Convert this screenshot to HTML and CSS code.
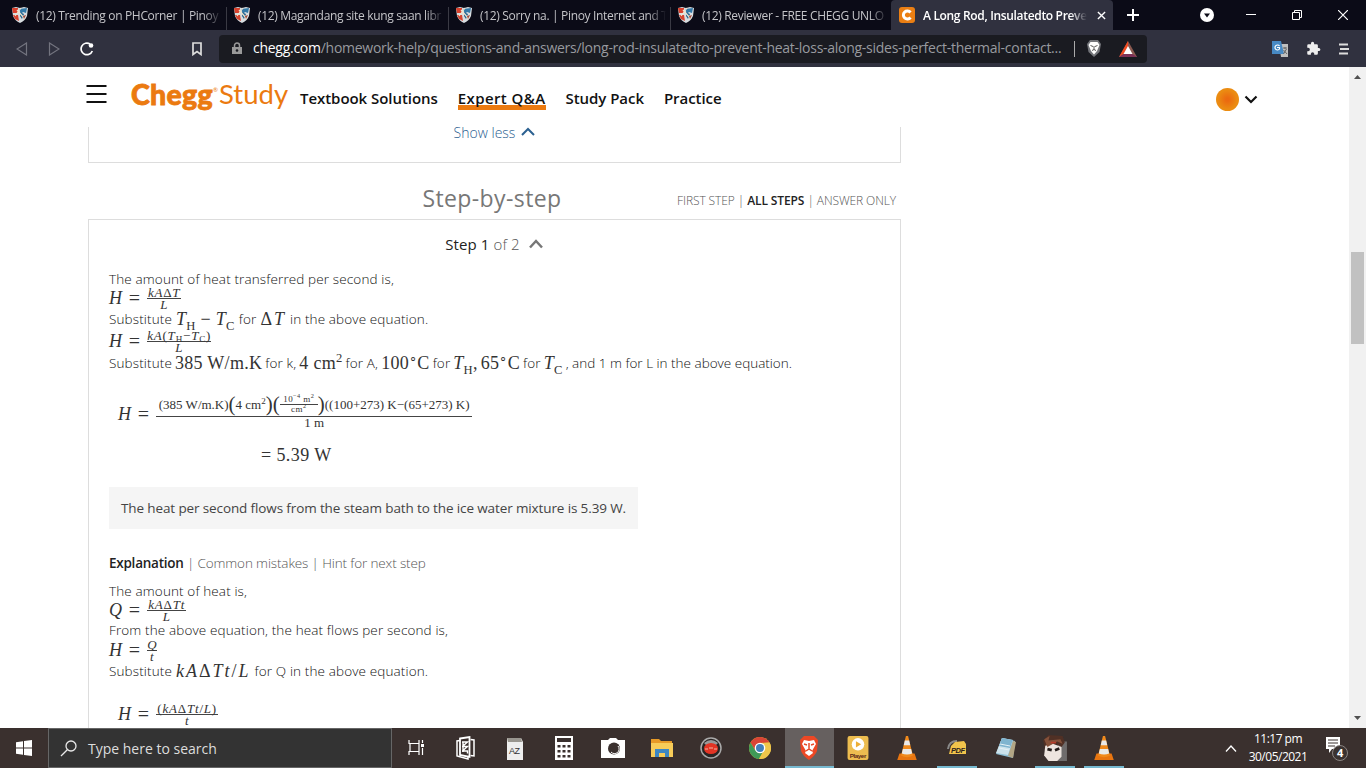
FILE: index.html
```html
<!DOCTYPE html>
<html lang="en">
<head>
  <meta charset="UTF-8" />
  <meta name="viewport" content="width=device-width, initial-scale=1" />
  <title>A Long Rod, Insulatedto Prevent Heat Loss | Chegg.com</title>
  <link rel="stylesheet" href="styles.css">
</head>
<body>
  <svg width="0" height="0" class="defs">
    <symbol id="shield" viewBox="0 0 16 16">
      <path d="M0 1L4 0L8 1L12 0L16 1L15 9Q13 14 8 16Q3 14 1 9Z" fill="#d8dde0"/>
      <path d="M0 1H6V6H1Z" fill="#d8402c"/>
      <path d="M7 2L15 1L14 6L11 5L9 7Z" fill="#3279a8"/>
      <path d="M8 5L12 7L10 12L8 9Z" fill="#26658f"/>
      <path d="M1 8L6 8L7 14L3 12Z" fill="#d5432f"/>
      <path d="M5 3L13 12M9 1L3 9" stroke="#eee5d0" stroke-width="1.2"/>
      <path d="M11 9L14 8L12 12Z" fill="#a04a3a"/>
    </symbol>
    <symbol id="vlc" viewBox="0 0 18 24">
      <path d="M2 17H16L18 23H0Z" fill="#e87510"/>
      <path d="M8 1H10L14.5 19Q9 22 3.5 19Z" fill="#f08a1c"/>
      <path d="M7 5H11L12 9.500H6Z" fill="#e9e9e9"/>
      <path d="M5.200 13H12.800L13.800 17Q9 19 4.200 17Z" fill="#e9e9e9"/>
    </symbol>
  </svg>

  <div class="tabs">
    <div class="tab"><svg class="fav"><use href="#shield"/></svg><span class="tab-title">(12) Trending on PHCorner | Pinoy I</span></div>
    <div class="tab"><svg class="fav"><use href="#shield"/></svg><span class="tab-title">(12) Magandang site kung saan libr</span></div>
    <div class="tab"><svg class="fav"><use href="#shield"/></svg><span class="tab-title">(12) Sorry na. | Pinoy Internet and T</span></div>
    <div class="tab last"><svg class="fav"><use href="#shield"/></svg><span class="tab-title">(12) Reviewer - FREE CHEGG UNLO</span></div>
    <div class="tab active">
      <span class="chegg-fav"><svg width="16" height="16" viewBox="0 0 16 16"><path d="M11.500 5.500A4 4 0 1 0 11.500 10.500" fill="none" stroke="#fff" stroke-width="3"/></svg></span>
      <span class="tab-title">A Long Rod, Insulatedto Preve</span>
      <svg width="9" height="9" viewBox="0 0 10 10"><path d="M1 1L9 9M9 1L1 9" stroke="#fff" stroke-width="1.500"/></svg>
    </div>
    <svg class="new-tab" width="12" height="12" viewBox="0 0 12 12"><path d="M6 0V12M0 6H12" stroke="#fff" stroke-width="2"/></svg>
    <div class="window-buttons">
      <svg class="tab-search" width="14" height="14" viewBox="0 0 14 14"><circle cx="7" cy="7" r="7" fill="#fff"/><path d="M4 5.500H10L7 9.500Z" fill="#0b0b17"/></svg>
      <svg width="10" height="10" viewBox="0 0 10 10"><path d="M0 4.500H10" stroke="#fff"/></svg>
      <svg width="10" height="10" viewBox="0 0 10 10"><path d="M.5 2.500H7.500V9.500H.5ZM2.500 2.500V.5H9.500V7.500H7.500" fill="none" stroke="#fff"/></svg>
      <svg width="10" height="10" viewBox="0 0 10 10"><path d="M0 0L10 10M10 0L0 10" stroke="#fff" stroke-width="1.200"/></svg>
    </div>
  </div>

  <div class="toolbar">
    <div class="nav-icons">
      <svg width="12" height="14" viewBox="0 0 12 14"><path d="M10.500 1V13L1 7Z" fill="none" stroke="#73747f" stroke-width="1.200"/></svg>
      <svg width="12" height="14" viewBox="0 0 12 14"><path d="M1.500 1V13L11 7Z" fill="none" stroke="#73747f" stroke-width="1.200"/></svg>
      <svg width="14" height="14" viewBox="0 0 14 14"><path d="M10 2A5.800 5.800 0 1 0 12.300 9" fill="none" stroke="#fff" stroke-width="1.700"/><circle cx="11" cy="3.500" r="2.300" fill="#fff"/></svg>
    </div>
    <svg class="bookmark" width="10" height="14" viewBox="0 0 10 14"><path d="M1 1H9V12.500L5 9.500L1 12.500Z" fill="none" stroke="#ddd" stroke-width="1.700"/></svg>
    <div class="url-bar">
      <svg width="10" height="13" viewBox="0 0 10 13"><path d="M2.500 6V3.500A2.500 2.500 0 0 1 7.500 3.500V6" fill="none" stroke="#9a9a9a" stroke-width="1.500"/><path d="M0 5H10V12H0Z" fill="#9a9a9a"/><circle cx="5" cy="8.500" r="1.300" fill="#1a1b21"/></svg>
      <span class="url"><b>chegg.com</b>/homework-help/questions-and-answers/long-rod-insulatedto-prevent-heat-loss-along-sides-perfect-thermal-contact...</span>
      <i class="url-line"></i>
      <svg width="14" height="17" viewBox="0 0 14 17"><path d="M3 0H11L14 4L12.500 12L7 17L1.500 12L0 4Z" fill="#73757a"/><path d="M3.500 2H10.500L12.500 5L10 11L7 14.500L4 11L1.500 5Z" fill="#fff"/><path d="M3.500 5.500L6 6.500M10.500 5.500L8 6.500M7 6V9.500M5 10.500L7 9.500L9 10.500" stroke="#555" fill="none"/></svg>
      <svg class="bat" width="18" height="16" viewBox="0 0 18 16"><path d="M9 0L18 16H0Z" fill="#8b5a50"/><path d="M9 0V6L4.500 13L0 16Z" fill="#f04a20"/><path d="M0 16H18L13.500 13H4.500Z" fill="#7d3158"/><path d="M9 5L13.500 13H4.500Z" fill="#fff"/></svg>
    </div>
    <div class="extensions">
      <svg width="16" height="16" viewBox="0 0 16 16"><path d="M7 3H16V16H9Z" fill="#bfbfbf"/><path d="M0 0H9L12 13H0Z" fill="#4789c4"/><path d="M7.500 5A2.500 2.500 0 1 0 7.500 8V6.500H5" fill="none" stroke="#fff" stroke-width="1.200"/><path d="M11 7H15M13 6V8M14.500 8L11.500 13M11.500 9L15 13" stroke="#666" fill="none"/></svg>
      <svg width="15" height="15" viewBox="0 0 24 24"><path d="M20.500 11H19V7a2 2 0 0 0-2-2h-4V3.500a2.500 2.500 0 0 0-5 0V5H4a2 2 0 0 0-2 2v3.800h1.500a2.700 2.700 0 0 1 0 5.400H2V20a2 2 0 0 0 2 2h3.800v-1.500a2.700 2.700 0 0 1 5.400 0V22H17a2 2 0 0 0 2-2v-4h1.500a2.500 2.500 0 0 0 0-5z" fill="#eee"/></svg>
      <svg width="10" height="12" viewBox="0 0 10 12"><path d="M0 1.500H9M1 6H10M0 10.500H9" stroke="#ddd" stroke-width="2"/></svg>
    </div>
  </div>

  <div class="page">
    <div class="content">
      <header class="site-header">
        <svg class="burger" width="20" height="18" viewBox="0 0 20 18"><path d="M0 1H20M0 9H20M0 17H20" stroke="#111" stroke-width="2"/></svg>
        <div class="logo"><b>Chegg</b><sup>®</sup><span>Study</span></div>
        <nav>
          <a>Textbook Solutions</a>
          <a class="current">Expert Q&amp;A</a>
          <a>Study Pack</a>
          <a>Practice</a>
        </nav>
        <div class="account">
          <span class="avatar"></span>
          <svg width="14" height="9" viewBox="0 0 14 9"><path d="M1.500 1.500L7 7L12.500 1.500" fill="none" stroke="#111" stroke-width="2.200"/></svg>
        </div>
      </header>

      <div class="question-card">
        <span>Show less</span>
        <svg width="14" height="9" viewBox="0 0 14 9"><path d="M1 8L7 2L13 8" fill="none" stroke="#2c6191" stroke-width="2"/></svg>
      </div>

      <div class="steps-header">
        <h2>Step-by-step</h2>
        <p class="step-filter">FIRST STEP | <b>ALL STEPS</b> | ANSWER ONLY</p>
      </div>

      <div class="step-card">
        <div class="step-title">
          <span><b>Step 1</b> of 2</span>
          <svg width="14" height="10" viewBox="0 0 14 10"><path d="M1 8.500L7 2L13 8.500" fill="none" stroke="#777" stroke-width="2.500"/></svg>
        </div>

        <div class="row r18"><span>The amount of heat transferred per second is,</span></div>
        <div class="row r20 math"><i>H</i><span class="eq">=</span><span class="frac f34"><span class="num"><i>kA</i>Δ<i>T</i></span><span class="den"><i>L</i></span></span></div>
        <div class="row r22"><span>Substitute</span><span class="m"><i>T</i><sub>H</sub> − <i>T</i><sub>C</sub></span><span>for</span><span class="m wide">Δ<i>T</i></span><span>in the above equation.</span></div>
        <div class="row r23 math"><i>H</i><span class="eq">=</span><span class="frac f64"><span class="num"><i>kA</i>(<i>T</i><sub>H</sub>−<i>T</i><sub>C</sub>)</span><span class="den"><i>L</i></span></span></div>
        <div class="row r20 values"><span>Substitute</span><span class="m">385 W/m.K</span><span>for k,</span><span class="m">4 cm<sup>2</sup></span><span>for A,</span><span class="m">100<sup>∘</sup>C</span><span>for</span><span class="m"><i>T</i><sub>H</sub>,</span><span class="m">65<sup>∘</sup>C</span><span>for</span><span class="m"><i>T</i><sub>C</sub></span><span class="rest">, and 1 m for L in the above equation.</span></div>

        <div class="row math big-eq"><i>H</i><span class="eq">=</span>
          <span class="frac f316">
            <span class="num">
              <span>(385 W/m.K)</span><span class="paren">(</span><span>4 cm<sup>2</sup></span><span class="paren">)(</span>
              <span class="frac f37"><span class="num">10<sup>−4</sup> m<sup>2</sup></span><span class="den">cm<sup>2</sup></span></span>
              <span class="paren">)</span><span>((100+273) K−(65+273) K)</span>
            </span>
            <span class="den">1 m</span>
          </span>
        </div>
        <div class="row math result"><span>= 5.39 W</span></div>

        <div class="answer">The heat per second flows from the steam bath to the ice water mixture is 5.39 W.</div>

        <div class="row explain"><span><b>Explanation</b> | Common mistakes | Hint for next step</span></div>
        <div class="row r18"><span>The amount of heat is,</span></div>
        <div class="row r20 math"><i>Q</i><span class="eq">=</span><span class="frac f39"><span class="num"><i>kA</i>Δ<i>Tt</i></span><span class="den"><i>L</i></span></span></div>
        <div class="row r20"><span>From the above equation, the heat flows per second is,</span></div>
        <div class="row r20 math"><i>H</i><span class="eq">=</span><span class="frac f10"><span class="num"><i>Q</i></span><span class="den"><i>t</i></span></span></div>
        <div class="row r22"><span>Substitute</span><span class="m wide"><i>kA</i>Δ<i>Tt</i>/<i>L</i></span><span>for Q in the above equation.</span></div>
        <div class="row math last-eq"><i>H</i><span class="eq">=</span><span class="frac f62"><span class="num">(<i>kA</i>Δ<i>Tt</i>/<i>L</i>)</span><span class="den"><i>t</i></span></span></div>
      </div>
    </div>
    <div class="scrollbar">
      <svg width="9" height="5" viewBox="0 0 9 5"><path d="M1 5L4.500 1L8 5Z" fill="#505050"/></svg>
      <div class="thumb"></div>
      <svg width="9" height="5" viewBox="0 0 9 5"><path d="M1 0L4.500 4L8 0Z" fill="#505050"/></svg>
    </div>
  </div>

  <div class="taskbar">
    <div class="start"><svg width="16" height="16" viewBox="0 0 16 16"><path d="M0 2.300L7 1.300V7.500H0ZM8 1.100L16 0V7.500H8ZM0 8.500H7V14.700L0 13.700ZM8 8.500H16V16L8 14.900Z" fill="#fff"/></svg></div>
    <div class="search">
      <svg width="17" height="17" viewBox="0 0 17 17"><circle cx="11" cy="6" r="5" fill="none" stroke="#e8e8e8" stroke-width="1.300"/><path d="M7.300 9.700L1 16" stroke="#e8e8e8" stroke-width="1.300"/></svg>
      <span>Type here to search</span>
    </div>
    <div class="apps">
      <div class="app"><svg width="17" height="16" viewBox="0 0 17 16"><path d="M1 0V3.500H11V0M2 3.500V11.500M11 3.500V11.500M1 15V11.500H11V15M14.500 0V3M14.500 8V15" fill="none" stroke="#fff" stroke-width="1.200"/><path d="M13 4H16V7H13Z" fill="#fff"/></svg></div>
      <div class="app"><svg width="19" height="24" viewBox="0 0 19 24"><path d="M4 4.500L1 5V20L12 23V21" fill="none" stroke="#fff" stroke-width="1.500"/><path d="M4 2.500L13.500 1V21L4 19Z" fill="none" stroke="#fff" stroke-width="1.800"/><path d="M14.500 3.500L18 4V20L14.500 19.500" fill="none" stroke="#fff" stroke-width="1.500"/><path d="M6 6H11.500L7 10M6 10.500H11.500L7 14.500M6 15H11.500V17.500M7 6V16" fill="none" stroke="#fff" stroke-width="1.400"/></svg></div>
      <div class="app"><svg width="17" height="23" viewBox="0 0 17 23"><path d="M1 1H15L17 5V23H1Z" fill="#eee"/><path d="M1 1H15L16 5H2Z" fill="#99968f"/><text x="3" y="17" font-family="Liberation Sans" font-size="9" fill="#333" textLength="11">AZ</text></svg></div>
      <div class="app"><svg width="18" height="24" viewBox="0 0 18 24"><path d="M0 0H18V24H0Z" fill="#fff"/><path d="M2 2H16V6H2Z" fill="#3a302e"/><path d="M4 9V22M9 9V22M14 9V22" stroke="#3a302e" stroke-width="3" stroke-dasharray="2.500 2.500"/></svg></div>
      <div class="app"><svg width="24" height="20" viewBox="0 0 24 20"><path d="M0 2H7L9 0H15L17 2H24V20H0Z" fill="#fff"/><circle cx="13" cy="10.500" r="6" fill="#3a302e"/><path d="M17 8A4.500 4.500 0 0 1 10 14" fill="none" stroke="#fff"/></svg></div>
      <div class="app"><svg width="22" height="18" viewBox="0 0 22 18"><path d="M0 0H8L10 2H21V6H0Z" fill="#e79a27"/><path d="M0 4H22V18H0Z" fill="#f7cc59"/><path d="M4 18V10H18V18H14V14H8V18Z" fill="#3d87c3"/></svg></div>
      <div class="app"><svg width="22" height="22" viewBox="0 0 22 22"><circle cx="11" cy="11" r="10" fill="#292524" stroke="#aaa" stroke-width="1.500"/><path d="M4 6Q11 0 18 6L16 8H6Z" fill="#999"/><ellipse cx="11" cy="11.500" rx="7" ry="5.500" fill="#e33424"/><path d="M5 12H8M9 11H13M14 12H17" stroke="#f5b4a4"/></svg></div>
      <div class="app"><svg width="22" height="22" viewBox="0 0 22 22"><circle cx="11" cy="11" r="11" fill="#e3b734"/><path d="M1.500 5.500A11 11 0 0 1 20.500 5.500L11 6L6 13Z" fill="#d94436"/><path d="M1.500 5.500A11 11 0 0 0 10 22L14 15L6 13Z" fill="#3f9a57"/><path d="M20.500 5.500A11 11 0 0 1 10 22L15 13L12 6Z" fill="#efc64b"/><circle cx="11" cy="11" r="5.300" fill="#fff"/><circle cx="11" cy="11" r="4" fill="#427fbd"/></svg></div>
      <div class="app selected"><svg width="20" height="24" viewBox="0 0 20 24"><path d="M5 0H15L19 4L18 15Q16 20 10 24Q4 20 2 15L1 4Z" fill="#ec4825"/><path d="M5 4L10 5L15 4L17 8L13 15L14 17L10 20L6 17L7 15L3 8Z" fill="#fff"/><path d="M5 8L8 9M15 8L12 9M10 7V13M7 15L10 13L13 15" fill="none" stroke="#e74a29" stroke-width="1.500"/></svg></div>
      <div class="app"><svg width="22" height="24" viewBox="0 0 20 23"><rect width="20" height="23" rx="2" fill="#edbd50"/><circle cx="10" cy="8" r="6" fill="#fff"/><path d="M8 5L13 8L8 11Z" fill="#edae36"/><text x="2" y="21" font-family="Liberation Sans" font-weight="bold" font-size="6" fill="#5a2b18" textLength="16">Player</text></svg></div>
      <div class="app"><svg width="20" height="26"><use href="#vlc"/></svg></div>
      <div class="app open"><svg width="20" height="16" viewBox="0 0 20 16"><path d="M1 9Q2 1 10 1" fill="none" stroke="#888" stroke-width="2"/><path d="M4 6L8 2L17 1L19 4V14H2Z" fill="#f0c34b"/><text x="4" y="13" font-family="Liberation Sans" font-weight="bold" font-style="italic" font-size="7.500" fill="#2a211b" textLength="14">PDF</text></svg></div>
      <div class="app"><svg width="22" height="22" viewBox="0 0 22 22"><path d="M7 1L20 4L18 21L1 17Z" fill="#8dbed4"/><path d="M7 1L18 3L13 18L1 16Z" fill="#cce2eb"/><path d="M7 1L18 3L15 11L4 9Z" fill="#7fb4cf"/><path d="M5 7L15 9M4 11L14 13" stroke="#e4f0f5"/><path d="M18 4L21 5L18 21L13 19Z" fill="#b3a685"/></svg></div>
      <div class="app open"><svg width="24" height="26" viewBox="0 0 22 24"><path d="M14 6H22V24H12Z" fill="#6f6c6c"/><path d="M0 5L5 0L18 1L20 7L17 11L12 8L2 14Z" fill="#503025"/><path d="M2 10L9 8L17 11V20L13 24H5L1 19Z" fill="#eee5df"/><path d="M1 4L6 1L5 5L16 4L18 8L13 6L4 11Z" fill="#84513a"/><path d="M4 13L8 14M11 14L15 12.500" stroke="#221b19" stroke-width="2.500"/><path d="M7 7H12" stroke="#b93b2a" stroke-width="1.500"/></svg></div>
      <div class="app open"><svg width="20" height="26"><use href="#vlc"/></svg></div>
    </div>
    <div class="tray">
      <svg width="12" height="7" viewBox="0 0 12 7"><path d="M1 6.500L6 1L11 6.500" fill="none" stroke="#fff" stroke-width="1.300"/></svg>
      <div class="clock"><span>11:17 pm</span><span>30/05/2021</span></div>
      <svg class="notify" width="24" height="26" viewBox="0 0 24 26"><path d="M1 1H15V13H7L4 17V13H1Z" fill="#fff"/><path d="M3 4H13M3 7H13M3 10H10" stroke="#3a302e"/><circle cx="15" cy="17" r="7.500" fill="#3a3230" stroke="#8b8583"/><text x="15" y="21" text-anchor="middle" font-family="Open Sans" font-weight="bold" font-size="11" fill="#fff">4</text></svg>
    </div>
  </div>
</body>
</html>
```
FILE: styles.css
```css
* {
  box-sizing: border-box;
}
body {
  margin: 0;
  width: 1366px;
  height: 768px;
  overflow: hidden;
  display: flex;
  flex-direction: column;
  font-family: "Open Sans", "Noto Sans", sans-serif;
  background-color: #fff;
}
svg {
  display: block;
  flex: none;
}
.defs {
  position: absolute;
}

/* browser tabs */
.tabs {
  height: 30px;
  display: flex;
  align-items: center;
  padding-left: 5px;
  background-color: #0b0b17;
}
.tab {
  width: 222px;
  height: 30px;
  display: flex;
  align-items: center;
  padding: 0 4px 0 7px;
  color: #c4c4c8;
  font-size: 12px;
  position: relative;
}
.tab::after {
  content: "";
  position: absolute;
  right: 0;
  top: 7px;
  width: 1px;
  height: 23px;
  background-color: #3a3a44;
}
.tab.last::after,
.tab.active::after {
  display: none;
}
.fav {
  width: 16px;
  height: 16px;
  margin-right: 8px;
}
.tab-title {
  width: 186px;
  overflow: hidden;
  white-space: nowrap;
  letter-spacing: -0.33px;
  -webkit-mask-image: linear-gradient(to right, #000 90%, transparent);
  mask-image: linear-gradient(to right, #000 90%, transparent);
}
.tab.active {
  width: 222px;
  margin-left: -2px;
  padding-left: 8px;
  background-color: #30313f;
  border-radius: 4px 4px 0 0;
  color: #fff;
  font-weight: 600;
}
.tab.active .tab-title {
  width: 164px;
  margin-right: 10px;
}
.chegg-fav {
  width: 16px;
  height: 16px;
  margin-right: 8px;
  border-radius: 3px;
  background-color: #eb7f13;
}
.new-tab {
  margin-left: 14px;
}
.window-buttons {
  flex: 1;
  display: flex;
  align-items: center;
  justify-content: flex-end;
  gap: 36px;
  padding-right: 18px;
}
.tab-search {
  margin-right: -4px;
}

/* address bar row */
.toolbar {
  height: 37px;
  display: flex;
  align-items: center;
  background-color: #30313f;
}
.nav-icons {
  display: flex;
  gap: 20px;
  width: 192px;
  padding-left: 16px;
}
.url-bar {
  width: 928px;
  height: 28px;
  margin-left: 17px;
  padding-left: 13px;
  display: flex;
  align-items: center;
  border-radius: 4px;
  background-color: #1a1b21;
}
.url {
  width: 821px;
  margin: -2px 0 0 11px;
  font-size: 14px;
  letter-spacing: -0.27px;
  white-space: nowrap;
  color: #989a9f;
}
.url b {
  font-weight: 400;
  color: #fff;
}
.url-line {
  width: 1px;
  height: 16px;
  margin-right: 12px;
  background-color: #aaa;
}
.bat {
  margin-left: 18px;
}
.extensions {
  flex: 1;
  display: flex;
  align-items: center;
  justify-content: flex-end;
  gap: 18px;
  padding-right: 17px;
}

/* page */
.page {
  height: 661px;
  display: flex;
}
.content {
  flex: 1;
  height: 661px;
  overflow: hidden;
}
.site-header {
  height: 60px;
  display: flex;
  align-items: center;
  padding: 0 91px 0 86px;
}
.burger {
  width: 21px;
  margin-top: -6px;
}
.logo {
  width: 157px;
  margin: -6px 12px 0 24px;
  display: flex;
  align-items: center;
  line-height: 34px;
  font-family: Lato, sans-serif;
  color: #eb7a10;
}
.logo b {
  font-size: 28.5px;
  font-weight: 900;
  letter-spacing: 0.3px;
  -webkit-text-stroke: 0.8px #eb7a10;
}
.logo sup {
  font-size: 6px;
  line-height: 6px;
  margin-bottom: 8px;
}
.logo span {
  margin-left: 1px;
  font-size: 27.5px;
}
nav {
  display: flex;
  gap: 20px;
  margin-top: 4px;
}
nav a {
  padding-bottom: 2px;
  font-size: 15px;
  line-height: 20px;
  font-weight: 600;
  letter-spacing: -0.05px;
  white-space: nowrap;
  color: #111;
}
nav a.current {
  letter-spacing: 0.4px;
  box-shadow: inset 0 -5px #eb7a10;
}
.account {
  margin-left: auto;
  display: flex;
  align-items: center;
  gap: 5px;
  margin-top: 4px;
}
.avatar {
  width: 23px;
  height: 23px;
  border-radius: 50%;
  background: radial-gradient(circle at 50% 50%, #eb6a10 10%, #eb8c12 60%);
}
.question-card {
  width: 813px;
  height: 36px;
  margin-left: 88px;
  display: flex;
  justify-content: center;
  gap: 6px;
  border: 1px solid #ddd;
  border-top: none;
  font-size: 14px;
  line-height: 12px;
  font-weight: 300;
  color: #2c6191;
}
.steps-header {
  width: 813px;
  height: 56px;
  margin-left: 88px;
  display: grid;
  grid-template-columns: 1fr auto 1fr;
  align-items: center;
  padding: 14px 5px 0 0;
}
.steps-header h2 {
  grid-column: 2;
  margin: 0;
  font-size: 23px;
  line-height: 30px;
  font-weight: 400;
  letter-spacing: 0.4px;
  color: #777;
}
.step-filter {
  margin: 4px 0 0;
  text-align: right;
  white-space: nowrap;
  font-size: 12px;
  font-weight: 300;
  letter-spacing: -0.1px;
  color: #555;
}
.step-filter b {
  font-weight: 600;
  color: #222;
}
.step-card {
  width: 813px;
  height: 600px;
  margin-left: 88px;
  padding-left: 20px;
  border: 1px solid #ddd;
}
.step-title {
  height: 50px;
  padding: 0 21px 2px 0;
  display: flex;
  align-items: center;
  justify-content: center;
  gap: 9px;
  font-size: 15px;
  font-weight: 300;
  letter-spacing: 0.1px;
  color: #555;
}
.step-title b {
  font-weight: 400;
  color: #222;
}
.row {
  display: flex;
  align-items: center;
  gap: 4px;
  white-space: nowrap;
  font-size: 13.5px;
  font-weight: 300;
  letter-spacing: 0.13px;
  color: #111;
}
.r18 {
  height: 18px;
}
.r20 {
  height: 20px;
}
.r22 {
  height: 22px;
}
.r23 {
  height: 23px;
}
.values {
  gap: 3px;
}
.values .rest {
  letter-spacing: 0;
}

/* formulas */
.math,
.m {
  font-family: "Liberation Serif", serif;
  font-size: 18px;
  font-weight: 400;
  color: #333;
}
.math {
  gap: 6.5px;
}
.m {
  line-height: 20px;
  letter-spacing: 0.3px;
}
.m.wide {
  letter-spacing: 2px;
}
.eq {
  width: 12px;
  font-size: 20px;
}
sub,
sup {
  font-size: 70%;
  line-height: 0;
}
.frac {
  display: inline-flex;
  flex-direction: column;
  align-items: center;
  font-size: 13px;
  line-height: 11px;
  letter-spacing: 0.8px;
}
.frac sub {
  vertical-align: -2px;
}
.frac .num {
  width: 100%;
  display: block;
  text-align: center;
  border-bottom: 1px solid #444;
}
.f34 {
  width: 34px;
}
.f64 {
  width: 64px;
}
.f39 {
  width: 39px;
}
.f10 {
  width: 10px;
}
.f62 {
  width: 62px;
}
.f316 {
  width: 316px;
  margin-bottom: 8px;
  letter-spacing: 0;
}
.f37 {
  width: 38px;
  font-size: 9px;
  line-height: 9px;
  letter-spacing: 0.4px;
}
.big-eq {
  height: 38px;
  margin: 22px 0 10px 9px;
}
.big-eq .f316 > .num {
  height: 24px;
  display: flex;
  align-items: center;
  justify-content: center;
}
.paren {
  font-size: 21px;
  line-height: 20px;
}
.result {
  height: 24px;
  padding-left: 152px;
  letter-spacing: 0.4px;
}
.answer {
  width: 529px;
  height: 42px;
  margin: 20px 0 24px;
  padding: 0 12px;
  line-height: 42px;
  font-size: 13.5px;
  letter-spacing: -0.12px;
  white-space: nowrap;
  color: #444;
  background-color: #f5f5f5;
}
.explain {
  height: 20px;
  margin-bottom: 9px;
  letter-spacing: -0.13px;
  color: #555;
}
.explain b {
  font-weight: 600;
  letter-spacing: -0.25px;
  color: #222;
}
.last-eq {
  height: 20px;
  margin: 22px 0 0 9px;
}

.scrollbar {
  width: 17px;
  display: flex;
  flex-direction: column;
  align-items: center;
  justify-content: space-between;
  padding: 7px 0;
  background-color: #f1f1f1;
}
.thumb {
  width: 13px;
  height: 92px;
  margin-bottom: 200px;
  background-color: #c1c1c1;
}

/* taskbar */
.taskbar {
  height: 40px;
  display: flex;
  background-color: #3a302e;
}
.start {
  width: 48px;
  display: flex;
  align-items: center;
  justify-content: center;
}
.search {
  width: 344px;
  display: flex;
  align-items: center;
  gap: 11px;
  padding-left: 11px;
  border: 1px solid #666;
  background-color: #333;
  color: #ddd;
  font-size: 14px;
}
.apps {
  display: flex;
}
.app {
  width: 49.100px;
  display: flex;
  align-items: center;
  justify-content: center;
}
.app.selected {
  background-color: #66605f;
  box-shadow: inset 0 -2px #76b9d0;
}
.app.open {
  background: linear-gradient(#76b9d0, #76b9d0) center bottom / 40px 2px no-repeat;
}
.tray {
  flex: 1;
  display: flex;
  align-items: center;
  justify-content: flex-end;
  padding-right: 17px;
  color: #fff;
  font-size: 12px;
  letter-spacing: -0.5px;
}
.notify {
  margin-top: 2px;
}
.clock {
  width: 60px;
  margin: 0 17px 0 11px;
  display: flex;
  flex-direction: column;
  align-items: center;
  line-height: 18px;
}
```
